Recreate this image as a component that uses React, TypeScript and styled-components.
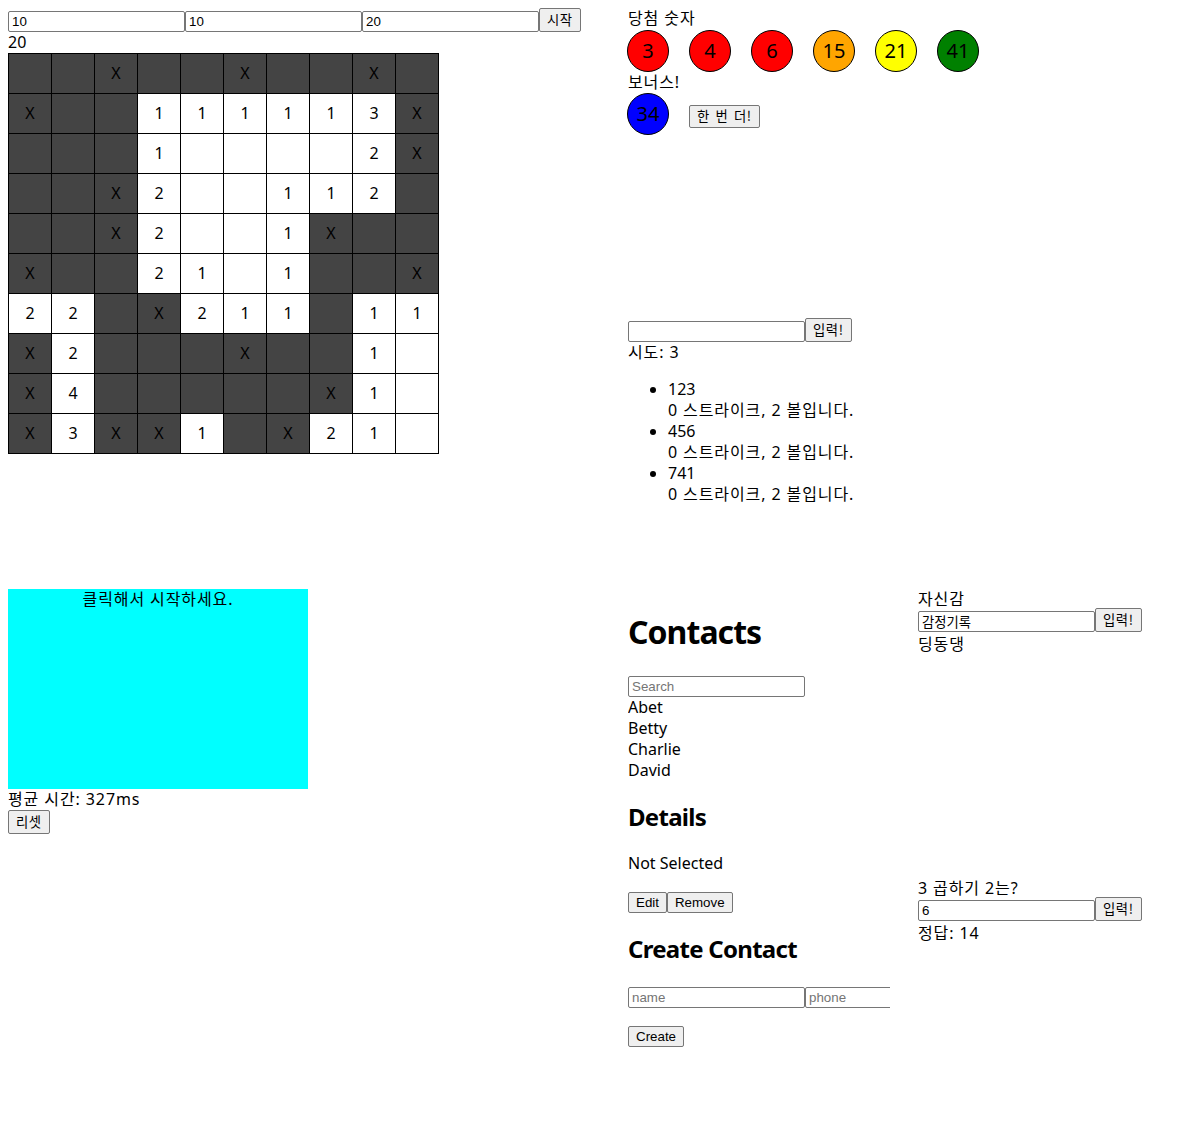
import styled, { createGlobalStyle } from "styled-components";

const GlobalStyle = createGlobalStyle`
  body {
    margin: 8px;
    font-family: "Noto Sans", "Noto Sans CJK KR", sans-serif;
    font-size: 16px;
    line-height: 21px;
    color: #000;
    background: #fff;
  }
`;

const BOARD = [
  "##X##X##X#",
  "X##111113X",
  "###1....2X",
  "##X2..112#",
  "##X2..1X##",
  "X##21.1##X",
  "22#X211#11",
  "X2###X##1.",
  "X4#####X1.",
  "X3XX1#X21.",
];

const WIN_BALLS = [3, 4, 6, 15, 21, 41];
const BONUS = 34;

const ballColor = (n: number) => {
  if (n <= 10) return "red";
  if (n <= 20) return "orange";
  if (n <= 30) return "yellow";
  if (n <= 40) return "blue";
  return "green";
};

const TRIES = ["123", "456", "741"];
const CONTACTS = ["Abet", "Betty", "Charlie", "David"];

const App = () => {
  return (
    <>
      <GlobalStyle />
      <Page>
        {/* 지뢰찾기 */}
        <Section>
          <FormRow>
            <TextInput defaultValue="10" />
            <TextInput defaultValue="10" />
            <TextInput defaultValue="20" />
            <Button>시작</Button>
          </FormRow>
          <Line>20</Line>
          <MineTable>
            <tbody>
              {BOARD.map((row, r) => (
                <tr key={r}>
                  {row.split("").map((c, i) => {
                    const closed = c === "#" || c === "X";
                    return (
                      <MineCell key={i} $closed={closed}>
                        {c === "#" || c === "." ? "" : c}
                      </MineCell>
                    );
                  })}
                </tr>
              ))}
            </tbody>
          </MineTable>
        </Section>

        {/* 로또 + 숫자야구 */}
        <Section>
          <Lotto>
            <Line $ko>당첨 숫자</Line>
            <BallRow>
              {WIN_BALLS.map((n) => (
                <Ball key={n} $color={ballColor(n)}>
                  {n}
                </Ball>
              ))}
            </BallRow>
            <Line $ko>보너스!</Line>
            <BonusRow>
              <Ball $color={ballColor(BONUS)}>{BONUS}</Ball>
              <RedoButton>한 번 더!</RedoButton>
            </BonusRow>
          </Lotto>
          <FormRow>
            <TextInput />
            <Button>입력!</Button>
          </FormRow>
          <Line $ko>시도: 3</Line>
          <TryList>
            {TRIES.map((t) => (
              <li key={t}>
                <div>{t}</div>
                <Line $ko>0 스트라이크, 2 볼입니다.</Line>
              </li>
            ))}
          </TryList>
        </Section>

        {/* 반응속도 */}
        <Section>
          <ResponseBox>클릭해서 시작하세요.</ResponseBox>
          <Line $ko>평균 시간: 327ms</Line>
          <Button>리셋</Button>
        </Section>

        {/* 연락처 + 끝말잇기 + 구구단 */}
        <SplitSection>
          <Contacts>
            <Title>Contacts</Title>
            <InputLine>
              <TextInput placeholder="Search" />
            </InputLine>
            {CONTACTS.map((c) => (
              <Line key={c}>{c}</Line>
            ))}
            <SubTitle>Details</SubTitle>
            <Line>Not Selected</Line>
            <InputLine $spaced>
              <Button $latin>Edit</Button>
              <Button $latin>Remove</Button>
            </InputLine>
            <SubTitle>Create Contact</SubTitle>
            <InputLine>
              <TextInput placeholder="name" />
              <TextInput placeholder="phone" />
            </InputLine>
            <InputLine $spaced>
              <Button $latin>Create</Button>
            </InputLine>
          </Contacts>

          <Quizzes>
            <QuizBlock>
              <Line $ko>자신감</Line>
              <QuizForm>
                <TextInput defaultValue="감정기록" />
                <Button>입력!</Button>
              </QuizForm>
              <Line $ko>딩동댕</Line>
            </QuizBlock>
            <QuizBlock>
              <Line $ko>3 곱하기 2는?</Line>
              <QuizForm>
                <TextInput defaultValue="6" />
                <Button>입력!</Button>
              </QuizForm>
              <Line $ko>정답: 14</Line>
            </QuizBlock>
          </Quizzes>
        </SplitSection>
      </Page>
    </>
  );
};

export default App;

const Page = styled.div`
  display: grid;
  grid-template-columns: 620px 1fr;
  grid-template-rows: 581px auto;
`;

const Section = styled.div`
  display: flex;
  flex-direction: column;
  align-items: flex-start;
`;

const SplitSection = styled.div`
  display: flex;
  align-items: flex-start;
`;

const Line = styled.div<{ $ko?: boolean }>`
  line-height: 21px;
  white-space: nowrap;
  letter-spacing: ${(p) => (p.$ko ? "0.9px" : "normal")};
`;

const FormRow = styled.div`
  display: flex;
  align-items: flex-end;
  height: 24px;
`;

const QuizForm = styled(FormRow)`
  margin-top: -2px;
  margin-bottom: 2px;
`;

const InputLine = styled.div<{ $spaced?: boolean }>`
  display: flex;
  align-items: flex-end;
  padding-top: 2px;
  margin-top: ${(p) => (p.$spaced ? "16px" : "0")};
`;

const TextInput = styled.input`
  box-sizing: border-box;
  width: 177px;
  height: 21px;
  flex-shrink: 0;
  margin: 0;
  padding: 1px 3px;
  border: 1px solid #767676;
  border-radius: 2px;
  font-family: "Liberation Sans", "Noto Sans CJK KR", sans-serif;
  font-size: 13.33px;
  color: #000;
  background: #fff;

  &::placeholder {
    color: #757575;
  }
`;

const Button = styled.button<{ $latin?: boolean }>`
  box-sizing: border-box;
  height: ${(p) => (p.$latin ? "21px" : "24px")};
  margin: 0;
  padding: 0 7px;
  border: 1px solid #767676;
  border-radius: 2px;
  background: #efefef;
  color: #000;
  font-family: ${(p) =>
    p.$latin
      ? `"Liberation Sans", Arial, sans-serif`
      : `"Noto Sans CJK KR", "Noto Sans", sans-serif`};
  font-size: 13.33px;
  line-height: 1;
  letter-spacing: ${(p) => (p.$latin ? "normal" : "0.6px")};
  white-space: nowrap;
`;

const RedoButton = styled(Button)`
  margin-top: 4px;
  height: 23px;
  word-spacing: 2px;
`;

const MineTable = styled.table`
  border-collapse: collapse;
  border-spacing: 0;
`;

const MineCell = styled.td<{ $closed: boolean }>`
  width: 42px;
  height: 39px;
  padding: 0;
  border: 1px solid #000;
  text-align: center;
  vertical-align: middle;
  font-size: 16px;
  color: #000;
  background: ${(p) => (p.$closed ? "#444444" : "#ffffff")};
`;

const Lotto = styled.div`
  min-height: 310px;
`;

const BallRow = styled.div`
  display: flex;
  padding-top: 1px;
  height: 42px;
  margin-left: -1px;
`;

const BonusRow = styled.div`
  display: flex;
  align-items: center;
  margin-left: -1px;
`;

const Ball = styled.div<{ $color: string }>`
  box-sizing: border-box;
  width: 42px;
  height: 42px;
  margin-right: 20px;
  border: 1px solid #000;
  border-radius: 50%;
  background: ${(p) => p.$color};
  display: flex;
  align-items: center;
  justify-content: center;
  font-size: 20px;
  line-height: 1;
`;

const TryList = styled.ul`
  margin: 16px 0;
  padding-left: 40px;

  li {
    line-height: 21px;
  }
`;

const ResponseBox = styled.div`
  width: 300px;
  height: 200px;
  background: #00ffff;
  text-align: center;
  line-height: 21px;
  letter-spacing: 0.9px;
`;

const Contacts = styled.div`
  width: 262px;
  margin-right: 28px;
  overflow: hidden;
`;

const Title = styled.h1`
  margin: 21px 0;
  font-size: 32px;
  line-height: 43px;
  font-weight: 700;
  letter-spacing: -0.03em;
`;

const SubTitle = styled.h2`
  margin: 20px 0;
  font-size: 24px;
  line-height: 32px;
  font-weight: 700;
  letter-spacing: -0.03em;
  white-space: nowrap;
`;

const Quizzes = styled.div`
  display: flex;
  flex-direction: column;
`;

const QuizBlock = styled.div`
  min-height: 289px;
`;
